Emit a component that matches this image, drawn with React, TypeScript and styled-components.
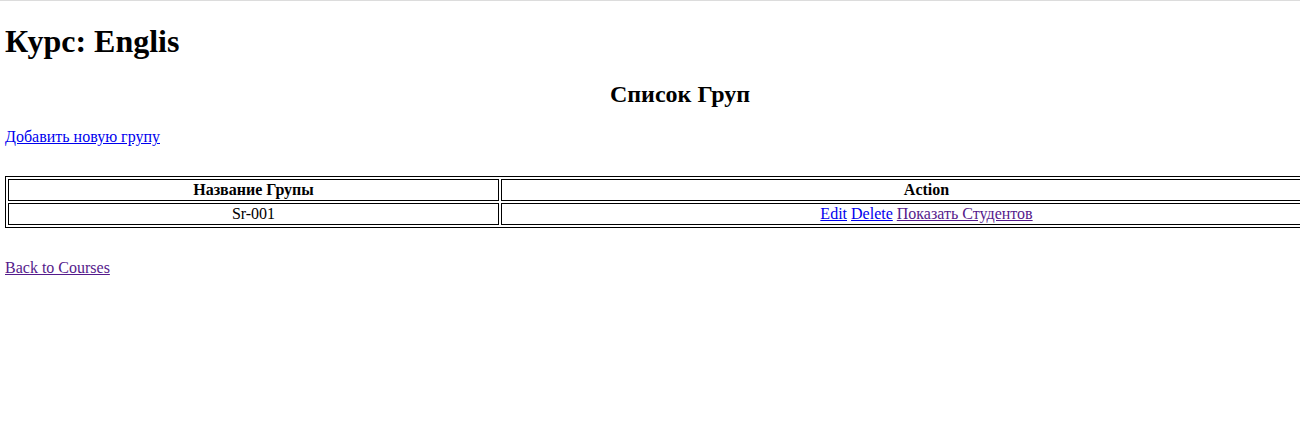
import React from 'react';
import styled, { createGlobalStyle } from 'styled-components';

const GlobalStyle = createGlobalStyle`
  html, body {
    margin: 0;
    padding: 0;
    background: #fff;
    overflow: hidden;
  }
  body {
    font-family: "Liberation Serif", "Times New Roman", serif;
    font-size: 16px;
    color: #000;
  }
`;

const groups = [{ id: 1, name: 'Sr-001' }];

export default function App() {
  return (
    <>
      <GlobalStyle />
      <Page>
        <CourseTitle>Курс: Englis</CourseTitle>
        <ListTitle>Список Груп</ListTitle>
        <AddRow>
          <Link href="#">Добавить новую групу</Link>
        </AddRow>
        <GroupTable>
          <thead>
            <tr>
              <HeadCell $width={487}>Название Групы</HeadCell>
              <HeadCell>Action</HeadCell>
            </tr>
          </thead>
          <tbody>
            {groups.map((g) => (
              <tr key={g.id}>
                <Cell>{g.name}</Cell>
                <Cell>
                  <Link href="#">Edit</Link> <Link href="#">Delete</Link>{' '}
                  <Link href="#" $visited>
                    Показать Студентов
                  </Link>
                </Cell>
              </tr>
            ))}
          </tbody>
        </GroupTable>
        <BackRow>
          <Link href="#" $visited>
            Back to Courses
          </Link>
        </BackRow>
      </Page>
    </>
  );
}

const Page = styled.div`
  border-top: 1px solid #dcdcdc;
  padding: 0 5px;
  width: 1350px;
  min-height: 445px;
`;

const CourseTitle = styled.h1`
  font-size: 32px;
  font-weight: bold;
  margin: 22px 0 21px;
`;

const ListTitle = styled.h2`
  font-size: 24px;
  font-weight: bold;
  text-align: center;
  margin: 21px 0 20px;
`;

const AddRow = styled.p`
  margin: 0 0 30px;
`;

const Link = styled.a<{ $visited?: boolean }>`
  color: ${({ $visited }) => ($visited ? '#551a8b' : '#0000ee')};
  text-decoration: underline;
  cursor: pointer;
`;

const GroupTable = styled.table`
  width: 100%;
  border: 1px solid #000;
  border-collapse: separate;
  border-spacing: 2px;
`;

const HeadCell = styled.th<{ $width?: number }>`
  border: 1px solid #000;
  padding: 1px;
  font-weight: bold;
  text-align: center;
  width: ${({ $width }) => ($width ? `${$width}px` : 'auto')};
`;

const Cell = styled.td`
  border: 1px solid #000;
  padding: 1px;
  text-align: center;
`;

const BackRow = styled.p`
  margin: 31px 0 0;
`;
